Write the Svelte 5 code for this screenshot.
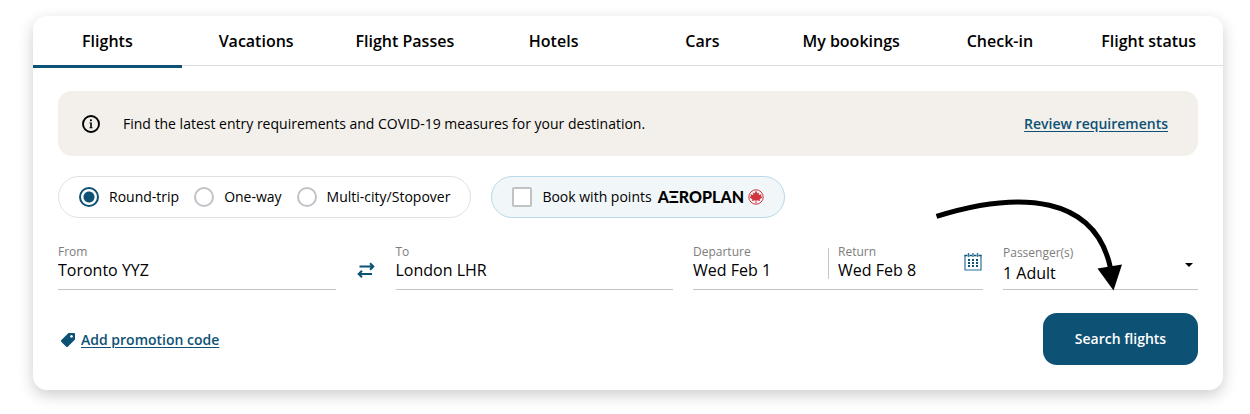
<script lang="ts">
	const tabs = [
		"Flights",
		"Vacations",
		"Flight Passes",
		"Hotels",
		"Cars",
		"My bookings",
		"Check-in",
		"Flight status",
	];
	const tripTypes = ["Round-trip", "One-way", "Multi-city/Stopover"];
	const dots = [0, 1, 2].flatMap((row) => [0, 1, 2].map((col) => ({ row, col })));

	let activeTab = $state("Flights");
	let tripType = $state("Round-trip");
	let withPoints = $state(false);
	let from = $state("Toronto YYZ");
	let to = $state("London LHR");
	let departure = $state("Wed Feb 1");
	let returning = $state("Wed Feb 8");
	let passengers = $state("1 Adult");

	function swap() {
		[from, to] = [to, from];
	}
</script>

<main class="card">
	<nav class="tabs">
		{#each tabs as tab}
			<button
				type="button"
				class="tab"
				class:active={tab === activeTab}
				onclick={() => (activeTab = tab)}>{tab}</button>
		{/each}
	</nav>

	<form class="content" onsubmit={(e) => e.preventDefault()}>
		<div class="notice">
			<svg class="info" viewBox="0 0 18 18" width="18" height="18" aria-hidden="true">
				<circle cx="9" cy="9" r="8" fill="none" stroke="#000" stroke-width="1.9" />
				<rect x="8" y="4.4" width="1.8" height="1.8" />
				<path d="M7.300 7.500h2.500v5h.9v.8H7.300v-.8h.9V8.300h-.9z" />
			</svg>
			<p>Find the latest entry requirements and COVID-19 measures for your destination.</p>
			<a href="#requirements">Review requirements</a>
		</div>

		<div class="options">
			<div class="pill trips" role="radiogroup" aria-label="Trip type">
				{#each tripTypes as type}
					<label>
						<input type="radio" name="trip" value={type} bind:group={tripType} />
						{type}
					</label>
				{/each}
			</div>
			<label class="pill points">
				<input type="checkbox" bind:checked={withPoints} />
				<span>Book with points</span>
				<span class="brand">AΞROPLAN</span>
				<svg viewBox="0 0 16 16" width="16" height="16" aria-hidden="true">
					<circle cx="8" cy="8" r="7.2" fill="none" stroke="#d0343c" stroke-width="1" />
					<path
						fill="#d0343c"
						d="M8 1.6 9.5 4.4 11.1 3.4 10.8 6 13.6 5.2 13 7.1 14.4 8.2 11.6 10.4 12.1 11.9 8.4 11.3 8.6 14.2H7.4L7.6 11.3 3.9 11.9 4.4 10.4 1.6 8.2 3 7.1 2.4 5.2 5.2 6 4.9 3.4 6.5 4.4z"
					/>
				</svg>
			</label>
		</div>

		<div class="fields">
			<div class="route">
				<div class="field">
					<label for="from">From</label>
					<input id="from" type="text" bind:value={from} />
				</div>
				<button type="button" class="swap" aria-label="Swap airports" onclick={swap}>
					<svg viewBox="0 0 18 16" width="18" height="16">
						<g fill="none" stroke="#0d5175" stroke-width="2">
							<path d="M2.500 4.500h14M13 1.300l3.300 3.200L13 7.700" />
							<path d="M15 12H1.500M5 8.800 1.700 12 5 15.200" />
						</g>
					</svg>
				</button>
				<div class="field">
					<label for="to">To</label>
					<input id="to" type="text" bind:value={to} />
				</div>
			</div>

			<div class="dates">
				<div class="date">
					<label for="departure">Departure</label>
					<input id="departure" type="text" bind:value={departure} />
				</div>
				<div class="date">
					<label for="return">Return</label>
					<input id="return" type="text" bind:value={returning} />
				</div>
				<button type="button" class="calendar" aria-label="Open calendar">
					<svg viewBox="0 0 18 18" width="18" height="18">
						<path d="M1 2.5V17h16V2.5" fill="none" stroke="#2a7199" stroke-width="1.2" />
						<path d="M.4 2.5h3.1m2 0h2.5m2 0h2.5m2 0h3.1" stroke="#0d5175" stroke-width="1.4" />
						<path d="M4.5 0v4M9 0v4M13.5 0v4" stroke="#2a7199" stroke-width="1.4" />
						{#each dots as { row, col }}
							<rect x={4 + col * 4} y={6 + row * 3} width="2" height="2" fill="#0d5175" />
						{/each}
					</svg>
				</button>
			</div>

			<div class="field passengers">
				<label for="passengers">Passenger(s)</label>
				<select id="passengers" bind:value={passengers}>
					<option>1 Adult</option>
					<option>2 Adults</option>
					<option>3 Adults</option>
				</select>
				<svg class="caret" viewBox="0 0 8 4" width="8" height="4" aria-hidden="true">
					<path d="M0 0h8L4 4z" />
				</svg>
			</div>
		</div>

		<div class="actions">
			<a class="promo" href="#promo">
				<svg viewBox="0 0 16 16" width="16" height="16" aria-hidden="true">
					<path
						fill="#0d5175"
						fill-rule="evenodd"
						d="M8.5 1H14a1 1 0 0 1 1 1v5.5L8 14.6q-1 1-2 0L1.400 10q-1-1 0-2zM11.500 3a1.400 1.400 0 1 0 .01 0z"
					/>
				</svg>
				<span>Add promotion code</span>
			</a>
			<button type="submit" class="search">Search flights</button>
		</div>
	</form>

	<svg class="pointer" viewBox="0 0 200 100" width="200" height="100" aria-hidden="true">
		<path d="M6.500 21.300C91 -5 165 1 180.500 73" fill="none" stroke="#000" stroke-width="5" />
		<path d="M167.500 73.500 192 69.500 183.500 95.500z" />
	</svg>
</main>

<style>
:global(body) {
	margin: 0;
	background: #fff;
}
.card {
	position: relative;
	margin: 16px 27px 24px 33px;
	border-radius: 14px;
	background: #fff;
	box-shadow: 0 5px 15px rgba(0, 0, 0, 0.2);
	font-family: "Open Sans", "Noto Sans", sans-serif;
	font-size: 14px;
	line-height: 20px;
	color: #000;
}
button,
input,
select {
	font: inherit;
	color: inherit;
	margin: 0;
	padding: 0;
	border: none;
	background: none;
}
button {
	cursor: pointer;
}
svg {
	display: block;
	flex: none;
}
a {
	color: #0d5175;
	font-weight: 600;
	text-underline-offset: 2px;
}
.tabs {
	display: flex;
	height: 49px;
	border-bottom: 1px solid #ddd;
}
.tab {
	flex: 1;
	height: 52px;
	box-sizing: border-box;
	border-bottom: 3px solid transparent;
	font-size: 16px;
	font-weight: 600;
}
.tab.active {
	border-bottom-color: #0d5175;
}
.content {
	padding: 25px;
}
.notice {
	display: flex;
	align-items: center;
	padding: 23px 30px 22px 24px;
	border-radius: 14px;
	background: #f3f0eb;
}
.notice p {
	flex: 1;
	margin: 0 0 0 23px;
}
.options {
	display: flex;
	gap: 20px;
	margin-top: 20px;
}
.pill {
	display: flex;
	align-items: center;
	height: 40px;
	padding: 0 20px;
	border: 1px solid #dfe2e4;
	border-radius: 21px;
}
.trips {
	gap: 15px;
}
.trips label {
	display: flex;
	align-items: center;
	gap: 10px;
}
.trips input {
	appearance: none;
	width: 20px;
	height: 20px;
	border: 2px solid #bfc3c7;
	border-radius: 50%;
	background: #fff;
}
.trips input:checked {
	border-color: #0d5175;
	background: radial-gradient(circle, #0d5175 5px, #fff 6px);
}
.points {
	border-color: #b9d9e8;
	background: #f1f6f9;
}
.points input {
	appearance: none;
	width: 20px;
	height: 20px;
	margin-right: 10px;
	border: 2px solid #c0c2c4;
	border-radius: 2px;
	background: #fff;
}
.points input:checked {
	background: #0d5175;
}
.brand {
	margin: 0 4px 0 6px;
	font-family: Lato, Inter, sans-serif;
	font-size: 16px;
	font-weight: 900;
}
.fields {
	display: grid;
	grid-template-columns: 1fr 290px 195px;
	gap: 20px;
	margin-top: 25px;
}
.route {
	display: flex;
}
.field,
.date {
	display: flex;
	flex-direction: column;
	flex: 1;
	min-width: 0;
}
.field,
.dates {
	height: 46px;
	border-bottom: 1px solid #c4c4c4;
}
.field label,
.date label {
	font-size: 12px;
	line-height: 18px;
	color: #7d7d7d;
}
.field input,
.date input,
.field select {
	width: 100%;
	height: 18px;
	font-size: 16px;
}
.swap {
	display: flex;
	justify-content: center;
	align-items: center;
	width: 60px;
	padding-top: 6px;
}
.dates {
	display: flex;
}
.date + .date {
	position: relative;
	flex: none;
	width: 126px;
	box-sizing: border-box;
	padding-left: 10px;
}
.date + .date::before {
	content: "";
	position: absolute;
	left: 0;
	top: 5px;
	width: 1px;
	height: 31px;
	background: #c4c4c4;
}
.calendar {
	display: flex;
	align-items: center;
	padding: 0 1px 8px 10px;
}
.passengers {
	position: relative;
}
.passengers label {
	line-height: 20px;
}
.passengers select {
	appearance: none;
}
.caret {
	position: absolute;
	right: 5px;
	top: 20px;
	pointer-events: none;
}
.actions {
	display: flex;
	justify-content: space-between;
	align-items: center;
	margin-top: 23px;
}
.promo {
	display: flex;
	align-items: center;
	gap: 5px;
	margin-left: 2px;
	padding-top: 2px;
	text-decoration: none;
}
.promo span {
	text-decoration: underline;
}
.search {
	width: 155px;
	height: 52px;
	border-radius: 14px;
	background: #0d5175;
	color: #fff;
	font-weight: 600;
}
.pointer {
	position: absolute;
	top: 179px;
	right: 93px;
	pointer-events: none;
}
</style>
